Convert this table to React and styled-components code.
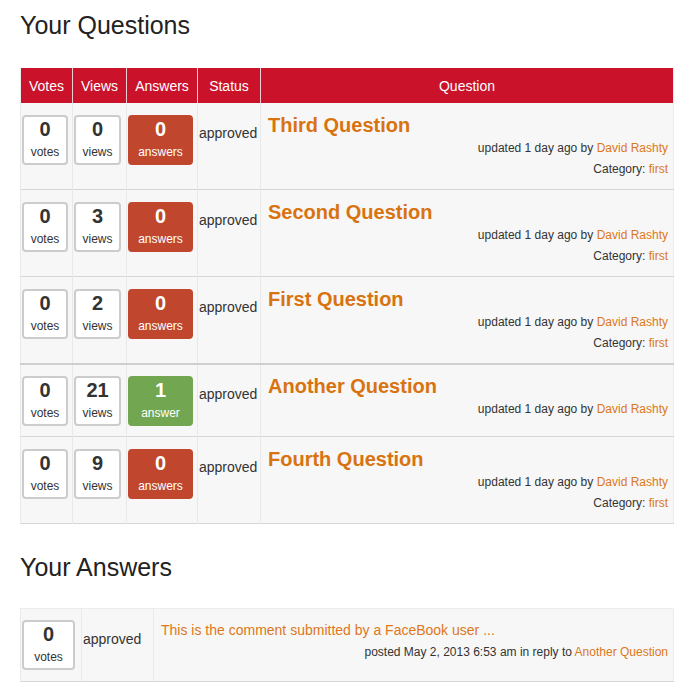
import React from "react";
import styled, { createGlobalStyle } from "styled-components";

const Global = createGlobalStyle`
  html, body { margin: 0; padding: 0; background: #fff; }
  body { font-family: "Liberation Sans", Arial, Helvetica, sans-serif; font-size: 14px; color: #333; }
  * { box-sizing: border-box; }
`;

const Page = styled.div`
  padding: 10px 20px 0;
`;

const Heading = styled.h2`
  margin: ${(p) => (p.$second ? "28px" : "0")} 0 ${(p) => (p.$second ? "26px" : "28px")};
  font-size: 25px;
  line-height: 30px;
  font-weight: normal;
  color: #222;
`;

const Table = styled.table`
  width: 100%;
  table-layout: fixed;
  border-collapse: collapse;
  border-left: 1px solid #ececec;
  border-right: 1px solid #ececec;
`;

const Col = styled.col`
  width: ${(p) => (p.$w ? `${p.$w}px` : "auto")};
`;

const HeadCell = styled.th`
  background: #ca122a;
  color: #fff;
  font-weight: normal;
  font-size: 14px;
  height: 35px;
  padding: 0;
  text-align: center;
  border-left: 1px solid #f0d0d4;
  &:first-child { border-left: none; }
`;

const Row = styled.tr`
  background: #f7f7f7;
  border-top: ${(p) => (p.$thick ? "2px solid #cfcfcf" : p.$first ? "1px solid #ececec" : "none")};
  border-bottom: 1px solid #d6d6d6;
`;

const StatCell = styled.td`
  vertical-align: top;
  padding: ${(p) => (p.$tight ? "11px" : "12px")} 0 10px 1px;
  border-left: 1px solid #e9e9e9;
  ${(p) => p.$answer && "padding: 11px 0 11px 1px;"}
`;

const StatusCell = styled.td`
  vertical-align: top;
  padding: ${(p) => (p.$tight ? "19px" : "20px")} 0 0 1px;
  line-height: 20px;
  font-size: 14px;
  color: #333;
  border-left: 1px solid #e9e9e9;
`;

const MainCell = styled.td`
  vertical-align: top;
  padding: ${(p) => (p.$tight ? "10px" : "11px")} 5px 9px 7px;
  border-left: 1px solid #e9e9e9;
`;

const StatBox = styled.div`
  width: ${(p) => p.$w}px;
  height: 50px;
  border-radius: 4px;
  text-align: center;
  border: 2px solid ${(p) => (p.$tone === "red" ? "#c0472e" : p.$tone === "green" ? "#72a650" : "#cccccc")};
  background: ${(p) => (p.$tone === "red" ? "#c0472e" : p.$tone === "green" ? "#72a650" : "#fff")};
  color: ${(p) => (p.$tone ? "#fff" : "#333")};
`;

const StatNumber = styled.div`
  font-size: 20px;
  line-height: 24px;
  font-weight: bold;
`;

const StatLabel = styled.div`
  font-size: 12px;
  line-height: 22px;
`;

const Title = styled.a`
  display: block;
  font-size: 20px;
  line-height: 22px;
  font-weight: bold;
  color: #d8730f;
  text-decoration: none;
  margin-bottom: 2px;
`;

const Meta = styled.div`
  text-align: right;
  font-size: 12px;
  line-height: 21px;
  color: #333;
  ${(p) => p.$gap && "margin-top: 2px;"}
`;

const Link = styled.a`
  color: #dd7719;
  text-decoration: none;
`;

const Comment = styled.a`
  display: block;
  font-size: 14px;
  line-height: 20px;
  color: #dd7719;
  text-decoration: none;
`;

const Stat = ({ value, label, tone, w }) => (
  <StatBox $tone={tone} $w={w}>
    <StatNumber>{value}</StatNumber>
    <StatLabel>{label}</StatLabel>
  </StatBox>
);

const questions = [
  { title: "Third Question", votes: 0, views: 0, answers: 0, category: "first" },
  { title: "Second Question", votes: 0, views: 3, answers: 0, category: "first" },
  { title: "First Question", votes: 0, views: 2, answers: 0, category: "first" },
  { title: "Another Question", votes: 0, views: 21, answers: 1, thick: true },
  { title: "Fourth Question", votes: 0, views: 9, answers: 0, category: "first" },
];

export default function App() {
  return (
    <Page>
      <Global />
      <Heading>Your Questions</Heading>
      <Table>
        <colgroup>
          <Col $w={52} />
          <Col $w={54} />
          <Col $w={71} />
          <Col $w={63} />
          <Col />
        </colgroup>
        <thead>
          <tr>
            <HeadCell>Votes</HeadCell>
            <HeadCell>Views</HeadCell>
            <HeadCell>Answers</HeadCell>
            <HeadCell>Status</HeadCell>
            <HeadCell>Question</HeadCell>
          </tr>
        </thead>
        <tbody>
          {questions.map((q) => (
            <Row key={q.title} $thick={q.thick}>
              <StatCell $tight={q.thick}>
                <Stat value={q.votes} label="votes" w={46} />
              </StatCell>
              <StatCell $tight={q.thick}>
                <Stat value={q.views} label="views" w={47} />
              </StatCell>
              <StatCell $tight={q.thick}>
                <Stat
                  value={q.answers}
                  label={q.answers === 1 ? "answer" : "answers"}
                  tone={q.answers > 0 ? "green" : "red"}
                  w={65}
                />
              </StatCell>
              <StatusCell $tight={q.thick}>approved</StatusCell>
              <MainCell $tight={q.thick}>
                <Title href="#">{q.title}</Title>
                <Meta>
                  updated 1 day ago by <Link href="#">David Rashty</Link>
                </Meta>
                {q.category && (
                  <Meta>
                    Category: <Link href="#">{q.category}</Link>
                  </Meta>
                )}
              </MainCell>
            </Row>
          ))}
        </tbody>
      </Table>

      <Heading $second>Your Answers</Heading>
      <Table>
        <colgroup>
          <Col $w={61} />
          <Col $w={72} />
          <Col />
        </colgroup>
        <tbody>
          <Row $first>
            <StatCell $answer>
              <Stat value={0} label="votes" w={53} />
            </StatCell>
            <StatusCell>approved</StatusCell>
            <MainCell>
              <Comment href="#">This is the comment submitted by a FaceBook user ...</Comment>
              <Meta $gap>
                posted May 2, 2013 6:53 am in reply to <Link href="#">Another Question</Link>
              </Meta>
            </MainCell>
          </Row>
        </tbody>
      </Table>
    </Page>
  );
}
